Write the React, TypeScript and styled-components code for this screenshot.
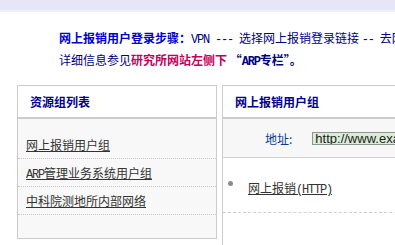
import React from "react";
import styled, { createGlobalStyle } from "styled-components";

const Global = createGlobalStyle`
  html, body { margin: 0; padding: 0; background: #ffffff; overflow: hidden; }
  body { font-family: "Noto Sans CJK SC", "Liberation Sans", sans-serif; font-size: 12px; }
`;

const Page = styled.div`
  width: 395px;
  height: 245px;
  overflow: hidden;
`;

const TopBar = styled.div`
  height: 10px;
  background: #e6e6f6;
  border-bottom: 2px solid #f0f0fa;
`;

const Notice = styled.div`
  margin-top: 15px;
  padding-left: 59px;
  font-size: 12px;
  color: #000080;
  white-space: nowrap;
`;

const NoticeLine = styled.div`
  height: 22px;
  line-height: 22px;
  overflow: visible;
`;

const Strong = styled.span<{ $tone?: "blue" | "red" | "navy" }>`
  font-weight: bold;
  color: ${(p) => (p.$tone === "red" ? "#c0005a" : p.$tone === "navy" ? "#000080" : "#0000cc")};
`;

const Latin = styled.span`
  font-family: "Liberation Mono", monospace;
  font-size: 12px;
  letter-spacing: -1.2px;
  line-height: 1;
`;

const Panels = styled.div`
  display: flex;
  gap: 5px;
  margin-top: 14px;
  padding-left: 17px;
  align-items: flex-start;
`;

const Panel = styled.div<{ $wide?: boolean }>`
  flex: 0 0 ${(p) => (p.$wide ? "300px" : "198px")};
  border: 1px solid #cccccc;
  border-right: ${(p) => (p.$wide ? "none" : "1px solid #cccccc")};
  border-bottom: ${(p) => (p.$wide ? "none" : "1px solid #cccccc")};
  background: #ffffff;
  height: ${(p) => (p.$wide ? "200px" : "auto")};
`;

const PanelHead = styled.div`
  height: 31px;
  display: flex;
  align-items: center;
  padding-left: 12px;
  border-bottom: 2px solid #cccccc;
  font-weight: bold;
  font-size: 12px;
  color: #00008b;
  background: #ffffff;
`;

const LinkList = styled.div`
  background: #f8f8f8;
  padding: 12px 0 23px;
`;

const LinkRow = styled.div`
  height: 27px;
  display: flex;
  align-items: center;
  padding-left: 8px;
  border-bottom: 1px dotted #c8c8c8;
`;

const ItemLink = styled.a`
  color: #333333;
  text-decoration: underline;
  text-underline-offset: 1px;
  font-size: 12px;
  line-height: 16px;
  cursor: pointer;
`;

const AddressRow = styled.div`
  height: 38px;
  background: #f7f7f7;
  border-bottom: 1px solid #d0d0d0;
  display: flex;
  align-items: center;
  padding-left: 42px;
  gap: 20px;
`;

const AddressLabel = styled.span`
  color: #0a3a9a;
  font-size: 12px;
`;

const AddressInput = styled.div`
  width: 120px;
  height: 11px;
  border: 1px solid #8a9a8a;
  background: #dcecd8;
  font-family: "Liberation Sans", Arial, sans-serif;
  font-size: 13px;
  line-height: 11px;
  color: #222222;
  padding-left: 2px;
  white-space: nowrap;
  overflow: hidden;
`;

const ServiceRow = styled.div`
  height: 32px;
  padding-top: 22px;
  display: flex;
  align-items: flex-start;
  padding-left: 5px;
  gap: 15px;
  border-bottom: 1px dashed #d0d0d0;
`;

const Dot = styled.span`
  flex: 0 0 5px;
  width: 5px;
  height: 5px;
  border-radius: 50%;
  background: #8c8c8c;
  margin-top: 1px;
`;

export default function App() {
  return (
    <Page>
      <Global />
      <TopBar />
      <Notice>
        <NoticeLine>
          <Strong $tone="blue">网上报销用户登录步骤：</Strong>
          <Latin>VPN --- </Latin>选择网上报销登录链接 <Latin>-- </Latin>去网上报销系统登录
        </NoticeLine>
        <NoticeLine>
          详细信息参见<Strong $tone="red">研究所网站左侧下</Strong>
          <Strong $tone="navy">&nbsp;“<Latin>ARP</Latin>专栏”。</Strong>
        </NoticeLine>
      </Notice>
      <Panels>
        <Panel>
          <PanelHead>资源组列表</PanelHead>
          <LinkList>
            <LinkRow>
              <ItemLink>网上报销用户组</ItemLink>
            </LinkRow>
            <LinkRow>
              <ItemLink>
                <Latin>ARP</Latin>管理业务系统用户组
              </ItemLink>
            </LinkRow>
            <LinkRow>
              <ItemLink>中科院测地所内部网络</ItemLink>
            </LinkRow>
          </LinkList>
        </Panel>
        <Panel $wide>
          <PanelHead>网上报销用户组</PanelHead>
          <AddressRow>
            <AddressLabel>地址:</AddressLabel>
            <AddressInput>http://www.example.com</AddressInput>
          </AddressRow>
          <ServiceRow>
            <Dot />
            <ItemLink>
              网上报销<Latin>(HTTP)</Latin>
            </ItemLink>
          </ServiceRow>
        </Panel>
      </Panels>
    </Page>
  );
}
